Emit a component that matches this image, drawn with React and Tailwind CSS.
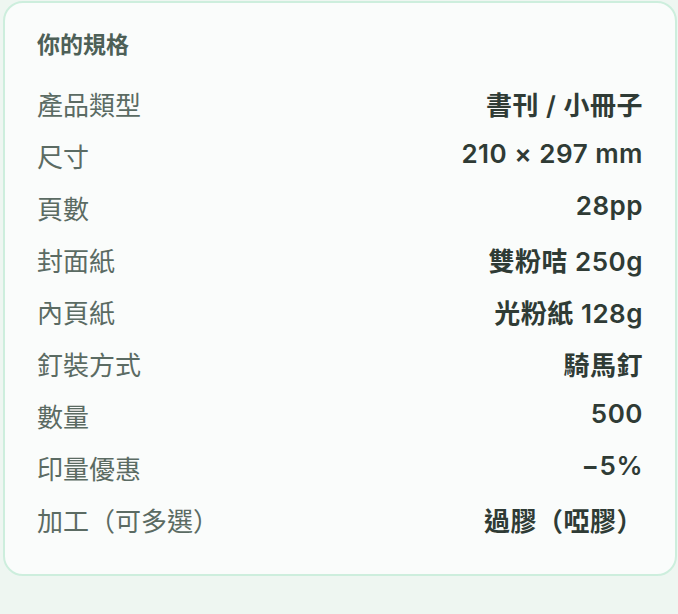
import React from 'react';

const specs = [
  { label: '產品類型', value: '書刊 / 小冊子' },
  { label: '尺寸', value: '210 × 297 mm', latin: true },
  { label: '頁數', value: '28pp', latin: true },
  { label: '封面紙', value: '雙粉咭 250g' },
  { label: '內頁紙', value: '光粉紙 128g' },
  { label: '釘裝方式', value: '騎馬釘' },
  { label: '數量', value: '500', latin: true },
  { label: '印量優惠', value: '−5%', latin: true },
  { label: '加工（可多選）', value: '過膠（啞膠）' },
];

export default function App() {
  return (
    <div
      className="min-h-[614px] w-full bg-[#eef6f1] pl-[3px] pr-[1px] pt-[1px]"
      style={{ fontFamily: '"Inter", "Noto Sans CJK TC", sans-serif' }}
    >
      {/* SPEC CARD */}
      <div className="rounded-[20px] border-2 border-[#cdeedd] bg-[#fafcfb] px-[32px] pt-[26px] pb-[20px]">
        <h2 className="flex h-[32px] items-center text-[23px] font-bold text-[#4d6057]">你的規格</h2>

        <div className="mt-[25px] flex flex-col">
          {specs.map((row) => (
            <div key={row.label} className="flex h-[52px] items-start justify-between">
              <span className="text-[26px] leading-normal text-[#5b6b63]">{row.label}</span>
              <span
                className={
                  row.latin
                    ? 'mt-[-4px] text-[26px] leading-normal font-semibold tracking-[0.5px] text-[#2f3b35]'
                    : 'text-[26px] leading-normal font-semibold tracking-[0.5px] text-[#2f3b35]'
                }
              >
                {row.value}
              </span>
            </div>
          ))}
        </div>
      </div>
    </div>
  );
}
